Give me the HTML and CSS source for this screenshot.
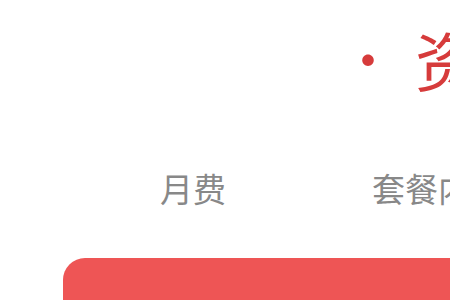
FILE: index.html
```html
<!DOCTYPE html>
<html lang="zh">
<head>
<meta charset="utf-8">
<title>资费说明</title>
<link rel="stylesheet" href="styles.css">
</head>
<body>
<div class="page">
  <h1 class="title"><span class="dot">·</span><span class="title-text">资费说明</span></h1>
  <div class="table-head">
    <span class="col col-fee">月费</span>
    <span class="col col-content">套餐内容</span>
  </div>
  <div class="btn-row">
    <button class="btn" type="button"></button>
  </div>
</div>
</body>
</html>
```

FILE: styles.css
```css
html, body {
  margin: 0;
  padding: 0;
  background: #ffffff;
}
body {
  width: 450px;
  height: 300px;
  overflow: hidden;
  font-family: "Noto Sans CJK SC", "Noto Sans", sans-serif;
}
.page {
  width: 900px;
}
.title {
  margin: 0;
  padding: 26px 0 0 341px;
  display: flex;
  align-items: center;
  gap: 54px;
  font-size: 64px;
  line-height: 64px;
  font-weight: 400;
  color: #d63b3b;
  white-space: nowrap;
}
.dot {
  width: 20px;
  text-align: center;
  font-size: 54px;
  line-height: 64px;
}
.title-text {
  letter-spacing: 4px;
}
.table-head {
  display: flex;
  padding: 78px 0 0 160px;
  gap: 146px;
  font-size: 33px;
  line-height: 40px;
  color: #888888;
  white-space: nowrap;
}
.btn-row {
  padding: 50px 0 0 63px;
}
.btn {
  display: block;
  width: 800px;
  height: 90px;
  border: none;
  border-radius: 22px;
  background: #ee5555;
}
```
